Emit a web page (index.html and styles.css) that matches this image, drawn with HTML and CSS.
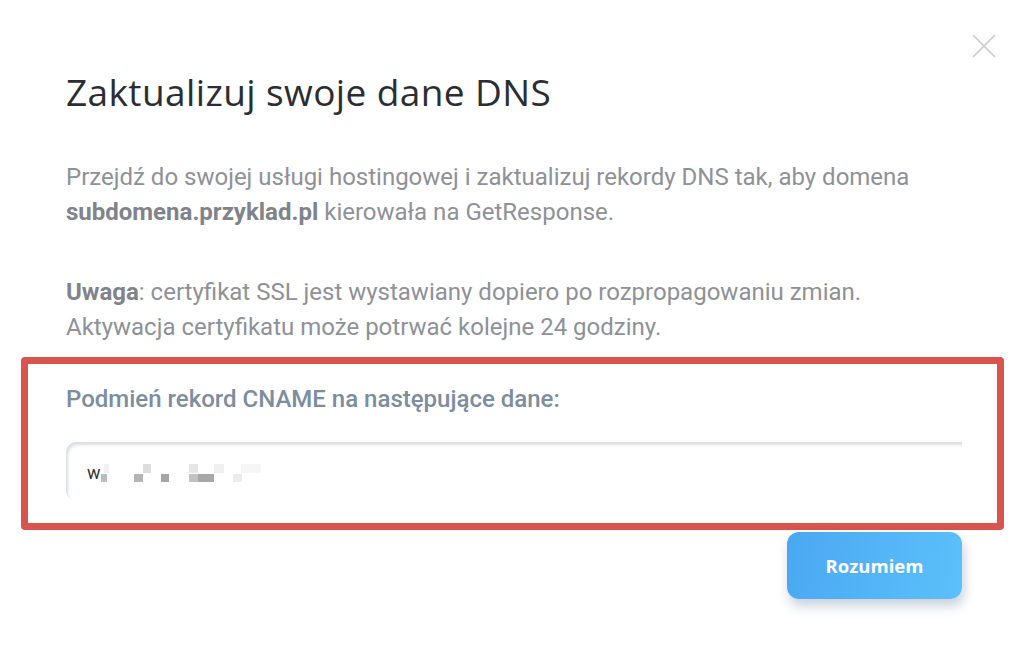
FILE: index.html
```html
<!DOCTYPE html>
<html lang="pl">
<head>
<meta charset="utf-8">
<link rel="stylesheet" href="styles.css">
</head>
<body>
<div class="modal">
  <button class="close" aria-label="Zamknij">
    <svg width="24" height="24" viewBox="0 0 24 24"><path d="M1 1 L23 23 M23 1 L1 23" stroke="#c9cacc" stroke-width="1.6" fill="none"/></svg>
  </button>
  <h1 class="title">Zaktualizuj swoje dane DNS</h1>
  <p class="text">Przejdź do swojej usługi hostingowej i zaktualizuj rekordy DNS tak, aby domena <b>subdomena.przyklad.pl</b> kierowała na GetResponse.</p>
  <p class="text note"><b>Uwaga</b>: certyfikat SSL jest wystawiany dopiero po rozpropagowaniu zmian.<br>Aktywacja certyfikatu może potrwać kolejne 24 godziny.</p>
  <div class="highlight">
    <div class="label">Podmień rekord CNAME na następujące dane:</div>
    <div class="field">
      <span class="val">w</span>
      <svg class="blur" width="170" height="20" viewBox="0 0 170 20">
        <rect x="3" y="2" width="5" height="9" fill="#f0f0f0"/>
        <rect x="42" y="2" width="8" height="9" fill="#dcdcdc"/>
        <rect x="88" y="2" width="9" height="9" fill="#e6e6e6"/>
        <rect x="113" y="2" width="10" height="9" fill="#f0f0f0"/>
        <rect x="140" y="2" width="20" height="9" fill="#f6f6f6"/>
        <rect x="0" y="12" width="6" height="9" fill="#bcbcbc"/>
        <rect x="33" y="12" width="9" height="9" fill="#b4b4b4"/>
        <rect x="60" y="12" width="8" height="9" fill="#a5a5a5"/>
        <rect x="88" y="12" width="9" height="9" fill="#c2c2c2"/>
        <rect x="97" y="12" width="16" height="9" fill="#a8a8a8"/>
        <rect x="132" y="12" width="9" height="9" fill="#ececec"/>
      </svg>
    </div>
  </div>
  <div class="actions">
    <button class="btn">Rozumiem</button>
  </div>
</div>
</body>
</html>
```
FILE: styles.css
```css
* { box-sizing: border-box; }
html, body { margin: 0; padding: 0; background: #fff; }
body { width: 1024px; height: 665px; overflow: hidden; }
.modal {
  position: relative;
  padding: 64px 62px 0 66px;
}
.close {
  position: absolute;
  top: 34px;
  right: 28px;
  width: 24px;
  height: 24px;
  padding: 0;
  border: 0;
  background: none;
}
.close svg { display: block; }
.title {
  margin: 0 0 40px;
  font-family: "Open Sans", sans-serif;
  font-weight: 400;
  font-size: 37px;
  line-height: 56px;
  letter-spacing: 0.4px;
  color: #2b2d30;
}
.text {
  margin: 0 0 45px;
  font-family: Roboto, sans-serif;
  font-size: 24px;
  line-height: 35px;
  color: #8e9196;
}
.text.note { margin-bottom: 12px; }
.text b { font-weight: 700; color: #80838a; }
.highlight {
  margin: 0 -42px 0 -45px;
  border: 7px solid #d9534f;
  border-radius: 4px;
  padding: 20px 35px 22px 38px;
}
.label {
  font-family: Roboto, sans-serif;
  font-weight: 500;
  font-size: 24px;
  line-height: 30px;
  color: #7b8d9e;
  margin-bottom: 28px;
}
.field {
  height: 59px;
  border-radius: 10px 0 0 10px;
  box-shadow: inset 2px 3px 3px rgba(150,160,175,0.35);
  display: flex;
  align-items: center;
  padding-left: 21px;
  font-family: Roboto, sans-serif;
  font-size: 18px;
  color: #333;
}
.val { margin-top: 1px; }
.blur { display: block; margin-left: 0; }
.actions {
  display: flex;
  justify-content: flex-end;
}
.btn {
  margin-top: 2px;
  width: 175px;
  height: 67px;
  border: 0;
  border-radius: 12px;
  background: linear-gradient(100deg, #4aa8f2 0%, #5cc0fb 100%);
  box-shadow: 2px 7px 12px rgba(60,90,130,0.28);
  color: #fff;
  font-family: "Open Sans", sans-serif;
  font-weight: 700;
  font-size: 18.5px;
}
```
